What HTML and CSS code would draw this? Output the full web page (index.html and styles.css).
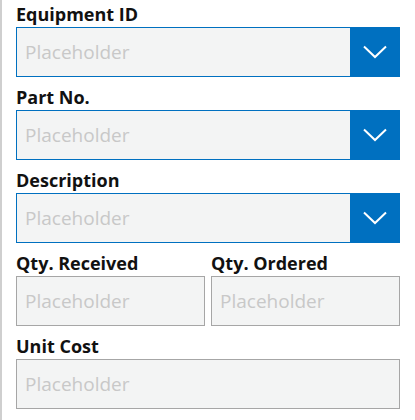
FILE: index.html
```html
<!DOCTYPE html>
<html>
<head>
<meta charset="utf-8">
<link rel="stylesheet" href="styles.css">
</head>
<body>
<div class="panel">
  <div class="field">
    <label class="label">Equipment ID</label>
    <div class="select">
      <span class="ph">Placeholder</span>
      <span class="btn"><svg width="24" height="14" viewBox="0 0 24 14"><path d="M1 1.5 L12 12 L23 1.5" fill="none" stroke="#fff" stroke-width="2"/></svg></span>
    </div>
  </div>
  <div class="field">
    <label class="label">Part No.</label>
    <div class="select">
      <span class="ph">Placeholder</span>
      <span class="btn"><svg width="24" height="14" viewBox="0 0 24 14"><path d="M1 1.5 L12 12 L23 1.5" fill="none" stroke="#fff" stroke-width="2"/></svg></span>
    </div>
  </div>
  <div class="field">
    <label class="label">Description</label>
    <div class="select">
      <span class="ph">Placeholder</span>
      <span class="btn"><svg width="24" height="14" viewBox="0 0 24 14"><path d="M1 1.5 L12 12 L23 1.5" fill="none" stroke="#fff" stroke-width="2"/></svg></span>
    </div>
  </div>
  <div class="row">
    <div class="field">
      <label class="label">Qty. Received</label>
      <div class="input"><span class="ph">Placeholder</span></div>
    </div>
    <div class="field">
      <label class="label">Qty. Ordered</label>
      <div class="input"><span class="ph">Placeholder</span></div>
    </div>
  </div>
  <div class="field">
    <label class="label">Unit Cost</label>
    <div class="input"><span class="ph">Placeholder</span></div>
  </div>
</div>
</body>
</html>
```

FILE: styles.css
```css
html, body {
  margin: 0;
  padding: 0;
  background: #fff;
}
body {
  font-family: "Open Sans", "Noto Sans", sans-serif;
}
.panel {
  border-left: 2px solid #cfcfcf;
  min-height: 420px;
  box-sizing: border-box;
  padding: 0 15px 0 14px;
  width: 415px;
}
.field {
  display: flex;
  flex-direction: column;
  margin-bottom: 6px;
}
.row {
  display: grid;
  grid-template-columns: 1fr 1fr;
  column-gap: 6px;
}
.label {
  display: block;
  height: 27px;
  font-size: 18px;
  font-weight: 700;
  line-height: 26px;
  color: #111;
  padding-top: 1px;
  box-sizing: border-box;
  white-space: nowrap;
}
.select, .input {
  height: 50px;
  box-sizing: border-box;
  background: #f3f4f4;
  display: flex;
  align-items: center;
}
.select {
  border: 1px solid #0070c0;
}
.input {
  border: 1px solid #a6a6a6;
}
.ph {
  flex: 1;
  font-size: 19px;
  line-height: 24px;
  color: #c8c8c8;
  padding-left: 8px;
  margin-top: -1px;
}
.btn {
  width: 50px;
  height: 50px;
  margin: -1px -1px -1px 0;
  background: #0070c0;
  display: flex;
  align-items: center;
  justify-content: center;
}
.btn svg {
  display: block;
}
```
